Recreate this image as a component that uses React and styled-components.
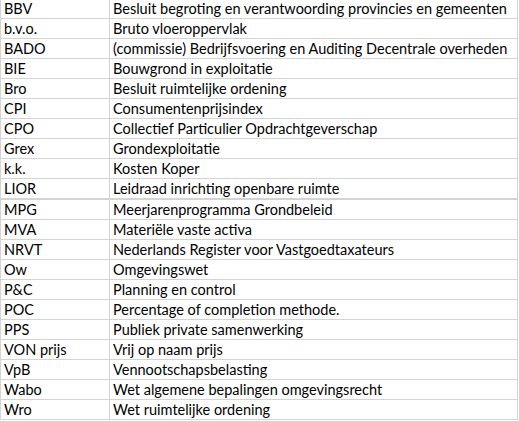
import React from 'react';
import styled, { createGlobalStyle } from 'styled-components';

const GlobalStyle = createGlobalStyle`
    html, body {
        margin: 0;
        padding: 0;
        background: #ffffff;
    }
`;

const Sheet = styled.div`
    width: 519px;
    height: 421px;
    overflow: hidden;
    background: #ffffff;
`;

const Table = styled.div`
    display: grid;
    grid-template-columns: 109px 408px;
    margin-top: -1px;
    border-left: 1px solid #d4d4d4;
    width: 518px;
    font-family: 'Lato', 'Liberation Sans', sans-serif;
    font-size: 14.5px;
    color: #000000;
`;

const Cell = styled.div`
    height: 19px;
    line-height: 19px;
    padding-left: 3px;
    border-bottom: ${(p) => (p.$thick ? '2px' : '1px')} solid #d4d4d4;
    border-right: 1px solid #d4d4d4;
    white-space: nowrap;
    overflow: hidden;
`;

const rows = [
    ['BBV', 'Besluit begroting en verantwoording provincies en gemeenten'],
    ['b.v.o.', 'Bruto vloeroppervlak'],
    ['BADO', '(commissie) Bedrijfsvoering en Auditing Decentrale overheden'],
    ['BIE', 'Bouwgrond in exploitatie'],
    ['Bro', 'Besluit ruimtelijke ordening'],
    ['CPI', 'Consumentenprijsindex'],
    ['CPO', 'Collectief Particulier Opdrachtgeverschap'],
    ['Grex', 'Grondexploitatie'],
    ['k.k.', 'Kosten Koper'],
    ['LIOR', 'Leidraad inrichting openbare ruimte'],
    ['MPG', 'Meerjarenprogramma Grondbeleid'],
    ['MVA', 'Materiële vaste activa'],
    ['NRVT', 'Nederlands Register voor Vastgoedtaxateurs'],
    ['Ow', 'Omgevingswet'],
    ['P&C', 'Planning en control'],
    ['POC', 'Percentage of completion methode.'],
    ['PPS', 'Publiek private samenwerking'],
    ['VON prijs', 'Vrij op naam prijs'],
    ['VpB', 'Vennootschapsbelasting'],
    ['Wabo', 'Wet algemene bepalingen omgevingsrecht'],
    ['Wro', 'Wet ruimtelijke ordening'],
];

export default function App() {
    return (
        <Sheet>
            <GlobalStyle />
            <Table>
                {rows.map(([abbr, text], i) => (
                    <React.Fragment key={abbr}>
                        <Cell $thick={i === 9}>{abbr}</Cell>
                        <Cell $thick={i === 9}>{text}</Cell>
                    </React.Fragment>
                ))}
            </Table>
        </Sheet>
    );
}
